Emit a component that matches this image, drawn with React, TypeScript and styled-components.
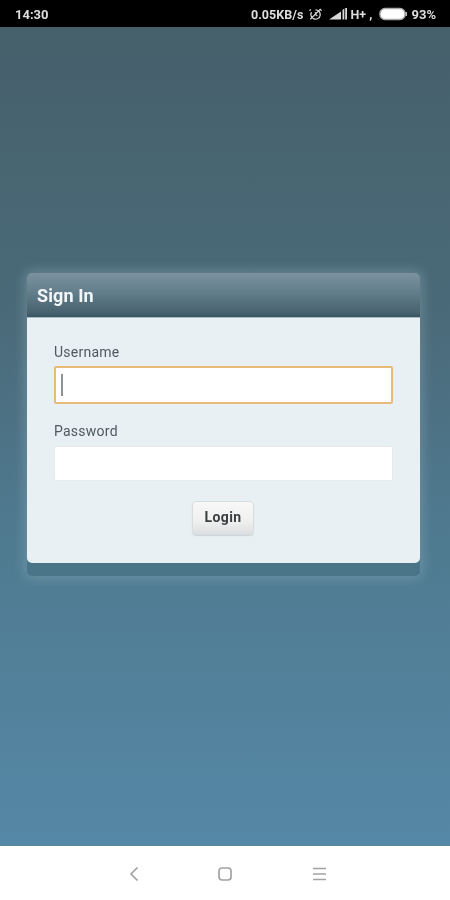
import React from "react";
import styled, { createGlobalStyle } from "styled-components";

const Global = createGlobalStyle`
  html, body { margin: 0; padding: 0; background: #fff; }
  #root { width: 450px; height: 900px; overflow: hidden; }
  * { box-sizing: border-box; }
`;
const Screen = styled.div`
  width: 450px; height: 900px; display: flex; flex-direction: column;
  font-family: Roboto, "Liberation Sans", sans-serif;
`;
const StatusBar = styled.header`
  height: 27px; background: #000; color: #dedede; display: flex; align-items: center;
  padding: 1px 14px 0 15px; font-weight: 700; filter: blur(0.45px);
`;
const Clock = styled.span`
  font-size: 13px; flex: 1;
`;
const StatusGroup = styled.div`
  display: flex; align-items: center;
`;
const Speed = styled.span`
  font-size: 12.5px; letter-spacing: 0.05px; margin-right: 5px;
`;
const SignalSlot = styled.span`
  display: flex; margin: 0 3px 0 6px;
`;
const Network = styled.span`
  font-size: 12.5px; width: 29px;
`;
const Percent = styled.span`
  font-size: 13px; margin-left: 3px;
`;
const Main = styled.main`
  flex: 1; padding: 246px 30px 0 27px;
  background: linear-gradient(180deg, #46606b 0%, #4a6a79 35%, #4f7a90 62%, #5588a6 100%);
`;
const Card = styled.section`
  width: 393px; height: 303px; display: flex; flex-direction: column;
  border-radius: 5px; background: #4a7488;
  box-shadow: 0 0 12px 3px rgba(170, 195, 205, 0.3);
`;
const CardHeader = styled.div`
  height: 45px; padding: 0 10px; display: flex; align-items: center;
  border-radius: 5px 5px 0 0; color: #f4f7f8; font-size: 18px; font-weight: 700; letter-spacing: 0.1px;
  background: linear-gradient(180deg, #7b929e 0%, #627d8b 45%, #48626f 90%, #3a5563 100%);
  border-bottom: 1px solid #a8bcc6;
  filter: blur(0.35px);
`;
const CardBody = styled.form`
  height: 245px; background: #e8f0f3; border-radius: 0 0 5px 5px;
  padding: 24px 27px 0; display: flex; flex-direction: column;
`;
const Label = styled.label`
  display: block; height: 20px; color: #4e5a60; font-size: 14px; line-height: 20px; letter-spacing: 0.25px;
  filter: blur(0.35px);
`;
const Field = styled.div<{ $focused?: boolean }>`
  width: 339px; height: ${p => (p.$focused ? 38 : 35)}px;
  margin: ${p => (p.$focused ? "4px 0 17px" : "5px 0 20px")};
  background: #fff; border-radius: 2px; position: relative;
  border: ${p => (p.$focused ? "2px solid #e8bc78" : "1px solid #e4ebee")};
`;
const Caret = styled.i`
  position: absolute; left: 5px; top: 6px; width: 2px; height: 22px; background: #8c9295;
`;
const Actions = styled.div`
  display: flex; justify-content: center; padding-right: 1px;
`;
const LoginButton = styled.button`
  width: 62px; height: 34px; padding: 0 0 2px; border: 1px solid #d8dddf; border-radius: 4px;
  font: 700 14px Roboto, "Liberation Sans", sans-serif; color: #3c3f41; letter-spacing: 0.4px;
  background: linear-gradient(180deg, #f8f8f8 0%, #f0f0f0 60%, #dcdfe0 100%);
  box-shadow: 0 1px 1px rgba(120, 130, 135, 0.25);
  filter: blur(0.35px);
`;
const NavBar = styled.nav`
  height: 54px; background: #fff; display: flex; align-items: center; justify-content: center;
  gap: 78px; padding: 2px 0 0 2px;
`;

const Alarm = () => (
  <svg width="15" height="15" viewBox="0 0 16 16" fill="none" stroke="#d4d4d4" strokeWidth="1.4">
    <path d="M8 3a5 5 0 1 1-4.300 2.500M3 2.500 1.500 4M13 2.500 14.500 4M8 5.500V8l2 1.500M2.500 13 13.500 2" />
  </svg>
);
const Signal = () => (
  <svg width="18" height="12" viewBox="0 0 18 12" fill="#d8d8d8">
    <path d="M0 11.500 12 3.500V11.500zM13.500 2l1.800-1.500V11.500H13.500zM16.200 0H18V11.500H16.200z" />
  </svg>
);
const Battery = () => (
  <svg width="29" height="14" viewBox="0 0 29 14">
    <rect x="1" y="1.500" width="25" height="11" rx="5" fill="#fff" stroke="#aaa" strokeWidth="1.500" />
    <rect x="26.500" y="5" width="1.500" height="4" fill="#bbb" />
  </svg>
);
const Back = () => (
  <svg width="14" height="18" viewBox="0 0 14 18" fill="none" stroke="#9a9a9a" strokeWidth="1.500">
    <path d="M12.500 2.500 6 9l6.500 6.500" />
  </svg>
);
const Home = () => (
  <svg width="16" height="16" viewBox="0 0 16 16" fill="none" stroke="#a2a2a2" strokeWidth="1.700">
    <rect x="2" y="2" width="12" height="12" rx="3" />
  </svg>
);
const Menu = () => (
  <svg width="16" height="14" viewBox="0 0 16 14" fill="none" stroke="#a2a2a2" strokeWidth="1.500">
    <path d="M2 1.500h13M2 7h13M2 12.500h13" />
  </svg>
);

export default function App() {
  return (
    <Screen>
      <Global />
      <StatusBar>
        <Clock>14:30</Clock>
        <StatusGroup>
          <Speed>0.05KB/s</Speed>
          <Alarm />
          <SignalSlot><Signal /></SignalSlot>
          <Network>H+ ,</Network>
          <Battery />
          <Percent>93%</Percent>
        </StatusGroup>
      </StatusBar>
      <Main>
        <Card>
          <CardHeader>Sign In</CardHeader>
          <CardBody>
            <Label>Username</Label>
            <Field $focused><Caret /></Field>
            <Label>Password</Label>
            <Field />
            <Actions><LoginButton type="button">Login</LoginButton></Actions>
          </CardBody>
        </Card>
      </Main>
      <NavBar>
        <Back />
        <Home />
        <Menu />
      </NavBar>
    </Screen>
  );
}
